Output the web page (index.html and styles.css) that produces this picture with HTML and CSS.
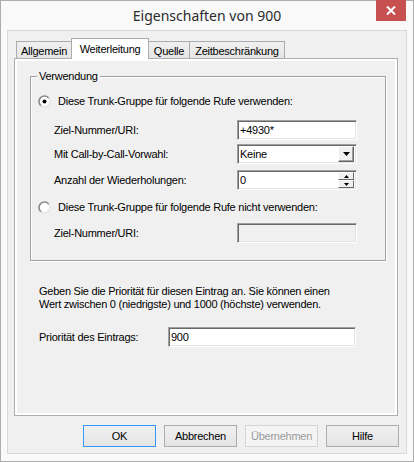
FILE: index.html
```html
<!DOCTYPE html>
<html lang="de">
<head>
    <meta charset="UTF-8">
    <meta name="viewport" content="width=device-width, initial-scale=1.0">
    <title>Eigenschaften von 900</title>
    <link rel="stylesheet" href="styles.css">
</head>
<body>
    <div class="window">
        <div class="titlebar">
            <span class="title">Eigenschaften von 900</span>
            <span class="close">
                <svg width="10" height="9" viewBox="0 0 10 9"><path d="M1 0.5 L9 8.5 M9 0.5 L1 8.5" stroke="#fff" stroke-width="2"/></svg>
            </span>
        </div>
        <div class="client">
            <div class="tabs">
                <div class="tab tab-allgemein">Allgemein</div>
                <div class="tab tab-weiter active">Weiterleitung</div>
                <div class="tab tab-quelle">Quelle</div>
                <div class="tab tab-zeit">Zeitbeschränkung</div>
            </div>
            <div class="panel">
                <div class="group">
                    <span class="caption">Verwendung</span>
                    <div class="opt">
                        <svg class="radio" width="13" height="13" viewBox="0 0 13 13">
                            <defs>
                                <linearGradient id="ring1" x1="0" y1="0" x2="1" y2="1">
                                    <stop offset="0.45" stop-color="#8a8a8a"/>
                                    <stop offset="0.6" stop-color="#e6e6e6"/>
                                </linearGradient>
                            </defs>
                            <circle cx="6.5" cy="6.5" r="5.5" fill="#fff" stroke="url(#ring1)" stroke-width="1.6"/>
                            <circle cx="6.5" cy="6.5" r="2" fill="#000"/>
                        </svg>
                        <span>Diese Trunk-Gruppe für folgende Rufe verwenden:</span>
                    </div>
                    <div class="field f-ziel">
                        <label>Ziel-Nummer/URI:</label>
                        <input class="edit" type="text" value="+4930*">
                    </div>
                    <div class="field f-vorwahl">
                        <label>Mit Call-by-Call-Vorwahl:</label>
                        <div class="edit combo">
                            <span class="value">Keine</span>
                            <span class="drop">
                                <svg width="7" height="4" viewBox="0 0 7 4"><path d="M0 0 H7 L3.5 4 Z" fill="#000"/></svg>
                            </span>
                        </div>
                    </div>
                    <div class="field f-anzahl">
                        <label>Anzahl der Wiederholungen:</label>
                        <div class="edit spin">
                            <span class="value">0</span>
                            <span class="updown">
                                <span class="step"><svg width="5" height="3" viewBox="0 0 5 3"><path d="M2.5 0 L5 3 H0 Z" fill="#000"/></svg></span>
                                <span class="step"><svg width="5" height="3" viewBox="0 0 5 3"><path d="M0 0 H5 L2.5 3 Z" fill="#000"/></svg></span>
                            </span>
                        </div>
                    </div>
                    <div class="opt opt-nicht">
                        <svg class="radio" width="13" height="13" viewBox="0 0 13 13">
                            <defs>
                                <linearGradient id="ring2" x1="0" y1="0" x2="1" y2="1">
                                    <stop offset="0.45" stop-color="#8a8a8a"/>
                                    <stop offset="0.6" stop-color="#e6e6e6"/>
                                </linearGradient>
                            </defs>
                            <circle cx="6.5" cy="6.5" r="5.5" fill="#fff" stroke="url(#ring2)" stroke-width="1.6"/>
                        </svg>
                        <span>Diese Trunk-Gruppe für folgende Rufe nicht verwenden:</span>
                    </div>
                    <div class="field f-ziel2">
                        <label>Ziel-Nummer/URI:</label>
                        <input class="edit" type="text" value="" disabled>
                    </div>
                </div>
                <p class="hint">Geben Sie die Priorität für diesen Eintrag an. Sie können einen<br>Wert zwischen 0 (niedrigste) und 1000 (höchste) verwenden.</p>
                <div class="field prio">
                    <label>Priorität des Eintrags:</label>
                    <input class="edit" type="text" value="900">
                </div>
            </div>
            <div class="buttons">
                <button class="btn default">OK</button>
                <button class="btn">Abbrechen</button>
                <button class="btn" disabled>Übernehmen</button>
                <button class="btn">Hilfe</button>
            </div>
        </div>
    </div>
</body>
</html>
```

FILE: styles.css
```css
* {
    box-sizing: border-box;
}
body {
    margin: 0;
    font-family: "Liberation Sans", Arial, sans-serif;
    font-size: 11px;
    letter-spacing: -0.25px;
    color: #000;
    background: #fff;
}
.window {
    position: relative;
    width: 414px;
    height: 462px;
    border: 1px solid #adadad;
    background: #f9f9f9;
    padding: 0 6px 7px;
    display: flex;
    flex-direction: column;
}
.titlebar {
    height: 29px;
    display: flex;
    align-items: center;
    justify-content: center;
}
.title {
    font-family: "Noto Sans", "Open Sans", sans-serif;
    font-size: 14px;
    letter-spacing: 0;
    color: #2b2b2b;
}
.close {
    position: absolute;
    top: -1px;
    right: 7px;
    width: 30px;
    height: 21px;
    background: #c75050;
    display: flex;
    align-items: center;
    justify-content: center;
}
.client {
    flex: 1;
    border: 1px solid #d9d9d9;
    background: #f0f0f0;
}

/* tab strip */
.tabs {
    display: flex;
    align-items: flex-end;
    height: 20px;
    margin: 7px 0 0 8px;
}
.tab {
    height: 17px;
    margin-left: -1px;
    border: 1px solid #acacac;
    border-bottom: none;
    background: linear-gradient(#f0f0f0, #e5e5e5);
    display: flex;
    align-items: center;
    justify-content: center;
    padding-top: 1px;
}
.tab-allgemein { width: 56px; margin-left: 0; }
.tab-weiter { width: 78px; }
.tab-quelle { width: 42px; }
.tab-zeit { width: 96px; }
.tab.active {
    position: relative;
    z-index: 1;
    height: 21px;
    margin-bottom: -1px;
    background: #fff;
    padding-top: 0;
    padding-bottom: 1px;
}
.panel {
    width: 384px;
    height: 358px;
    margin-left: 6px;
    border: 1px solid #adadad;
    box-shadow: inset 0 0 0 2px #fff;
}

/* group box */
.group {
    position: relative;
    width: 356px;
    height: 185px;
    margin: 17px 0 0 15px;
    padding: 17px 0 0 7px;
    border: 1px solid #a0a0a0;
    box-shadow: 1px 1px 0 #fff, inset 1px 1px 0 #fff;
}
.caption {
    position: absolute;
    top: -7px;
    left: 6px;
    padding: 0 2px;
    line-height: 13px;
    background: #f0f0f0;
}
.opt {
    display: flex;
    align-items: center;
    gap: 7px;
    height: 14px;
}
.radio {
    display: block;
}
.field {
    display: flex;
    align-items: center;
    height: 20px;
    padding-left: 16px;
}
.field label {
    width: 183px;
}
.f-ziel { margin-top: 12px; }
.f-vorwahl { margin-top: 4px; }
.f-anzahl { margin-top: 6px; }
.opt-nicht { margin-top: 10px; }
.f-ziel2 { margin-top: 9px; }

/* sunken edit fields */
.edit {
    width: 120px;
    height: 20px;
    margin: 0;
    padding: 0 2px;
    font: inherit;
    letter-spacing: inherit;
    color: #000;
    background: #fff;
    border: 1px solid;
    border-color: #a0a0a0 #fff #fff #a0a0a0;
    box-shadow: inset 1px 1px 0 #696969, inset -1px -1px 0 #e3e3e3;
    outline: none;
}
.edit:disabled {
    background: #f0f0f0;
}
.combo, .spin {
    display: flex;
    align-items: center;
    padding: 1px 2px 1px 2px;
}
.combo .value, .spin .value {
    flex: 1;
}
.drop {
    width: 16px;
    height: 16px;
    display: flex;
    align-items: center;
    justify-content: center;
    background: #f0f0f0;
    border: 1px solid;
    border-color: #fff #696969 #696969 #fff;
    box-shadow: inset -1px -1px 0 #a0a0a0;
}
.updown {
    width: 16px;
    height: 16px;
    display: flex;
    flex-direction: column;
}
.step {
    flex: 1;
    display: flex;
    align-items: center;
    justify-content: center;
    background: #f0f0f0;
    border: 1px solid;
    border-color: #fff #696969 #696969 #fff;
}

.hint {
    margin: 24px 0 0 24px;
    line-height: 13px;
}
.prio {
    margin-top: 16px;
    padding-left: 24px;
}
.prio label {
    width: 129px;
}
.prio .edit {
    width: 188px;
}

/* dialog buttons */
.buttons {
    display: flex;
    justify-content: flex-end;
    gap: 8px;
    margin: 9px 7px 0 0;
}
.btn {
    width: 73px;
    height: 22px;
    padding: 0;
    font: inherit;
    letter-spacing: inherit;
    color: #000;
    border: 1px solid #acacac;
    background: linear-gradient(#f0f0f0, #e5e5e5);
}
.btn.default {
    border-color: #3399ff;
}
.btn:disabled {
    color: #9a9a9a;
    border-color: #d5d5d5;
    background: #f4f4f4;
}
```
